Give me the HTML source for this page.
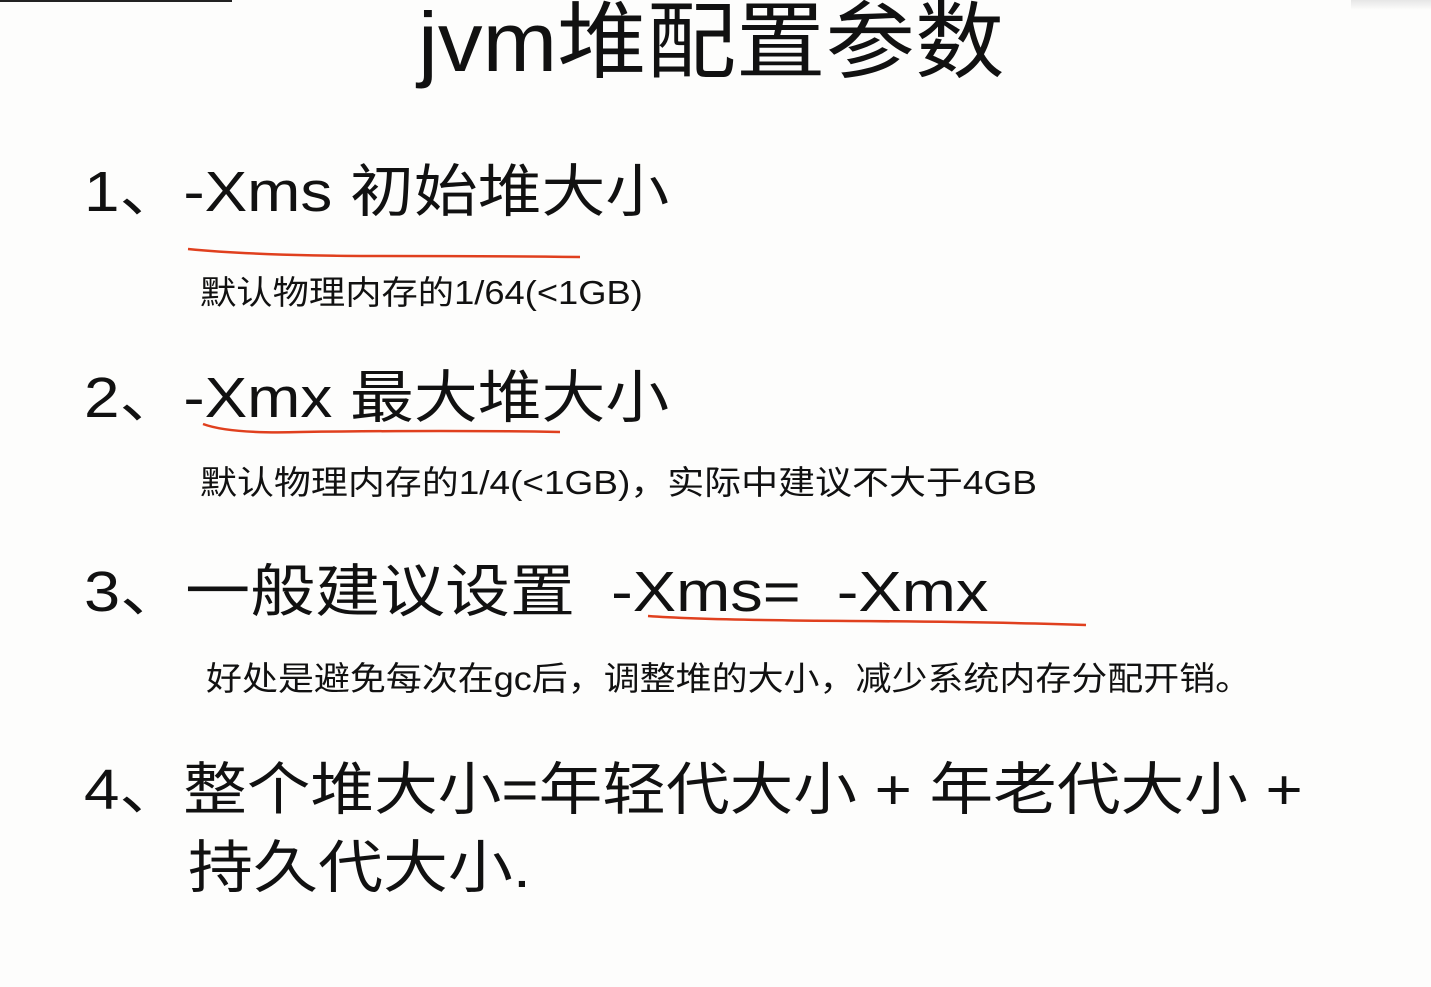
<!DOCTYPE html>
<html><head><meta charset="utf-8"><style>
html,body{margin:0;padding:0;background:#fdfdfc;}
body{width:1431px;height:987px;position:relative;overflow:hidden;font-family:"Liberation Sans","Noto Sans CJK SC",sans-serif;color:#111;}
.t{position:absolute;white-space:nowrap;line-height:1;transform-origin:left top;}
.title{left:418px;top:0px;font-size:84px;transform:scaleX(1.065);}
.big{font-size:57px;}
.sm{font-size:33px;}
</style></head><body>
<div style="position:absolute;left:0;top:0;width:232px;height:2px;background:#222"></div>
<div style="position:absolute;right:0;top:0;width:80px;height:10px;background:linear-gradient(#e6e6e6,#fdfdfc)"></div>
<div class="t title">jvm堆配置参数</div>
<div class="t big" style="left:84px;top:164px;transform:scaleX(1.12)">1、-Xms 初始堆大小</div>
<div class="t sm" style="left:200px;top:276px;transform:scaleX(1.10)">默认物理内存的1/64(&lt;1GB)</div>
<div class="t big" style="left:84px;top:370px;transform:scaleX(1.12)">2、-Xmx 最大堆大小</div>
<div class="t sm" style="left:200px;top:466px;transform:scaleX(1.12)">默认物理内存的1/4(&lt;1GB)，实际中建议不大于4GB</div>
<div class="t big" style="left:84px;top:564px;transform:scaleX(1.14)">3、一般建议设置&nbsp;&nbsp;-Xms=&nbsp;&nbsp;-Xmx</div>
<div class="t sm" style="left:206px;top:662px;transform:scaleX(1.09)">好处是避免每次在gc后，调整堆的大小，减少系统内存分配开销。</div>
<div class="t big" style="left:84px;top:762px;transform:scaleX(1.117)">4、整个堆大小=年轻代大小 + 年老代大小 +</div>
<div class="t big" style="left:188px;top:840px;transform:scaleX(1.14)">持久代大小.</div>
<svg style="position:absolute;left:0;top:0" width="1431" height="987">
<path d="M188 249 Q260 256 380 256 Q500 256 580 257" stroke="#e0401e" stroke-width="2.5" fill="none"/>
<path d="M203 424 Q230 434 300 432 Q450 430 560 432" stroke="#e0401e" stroke-width="2.5" fill="none"/>
<path d="M648 616 Q700 620 850 621 Q1000 622 1086 625" stroke="#e0401e" stroke-width="2.5" fill="none"/>
</svg>
</body></html>
